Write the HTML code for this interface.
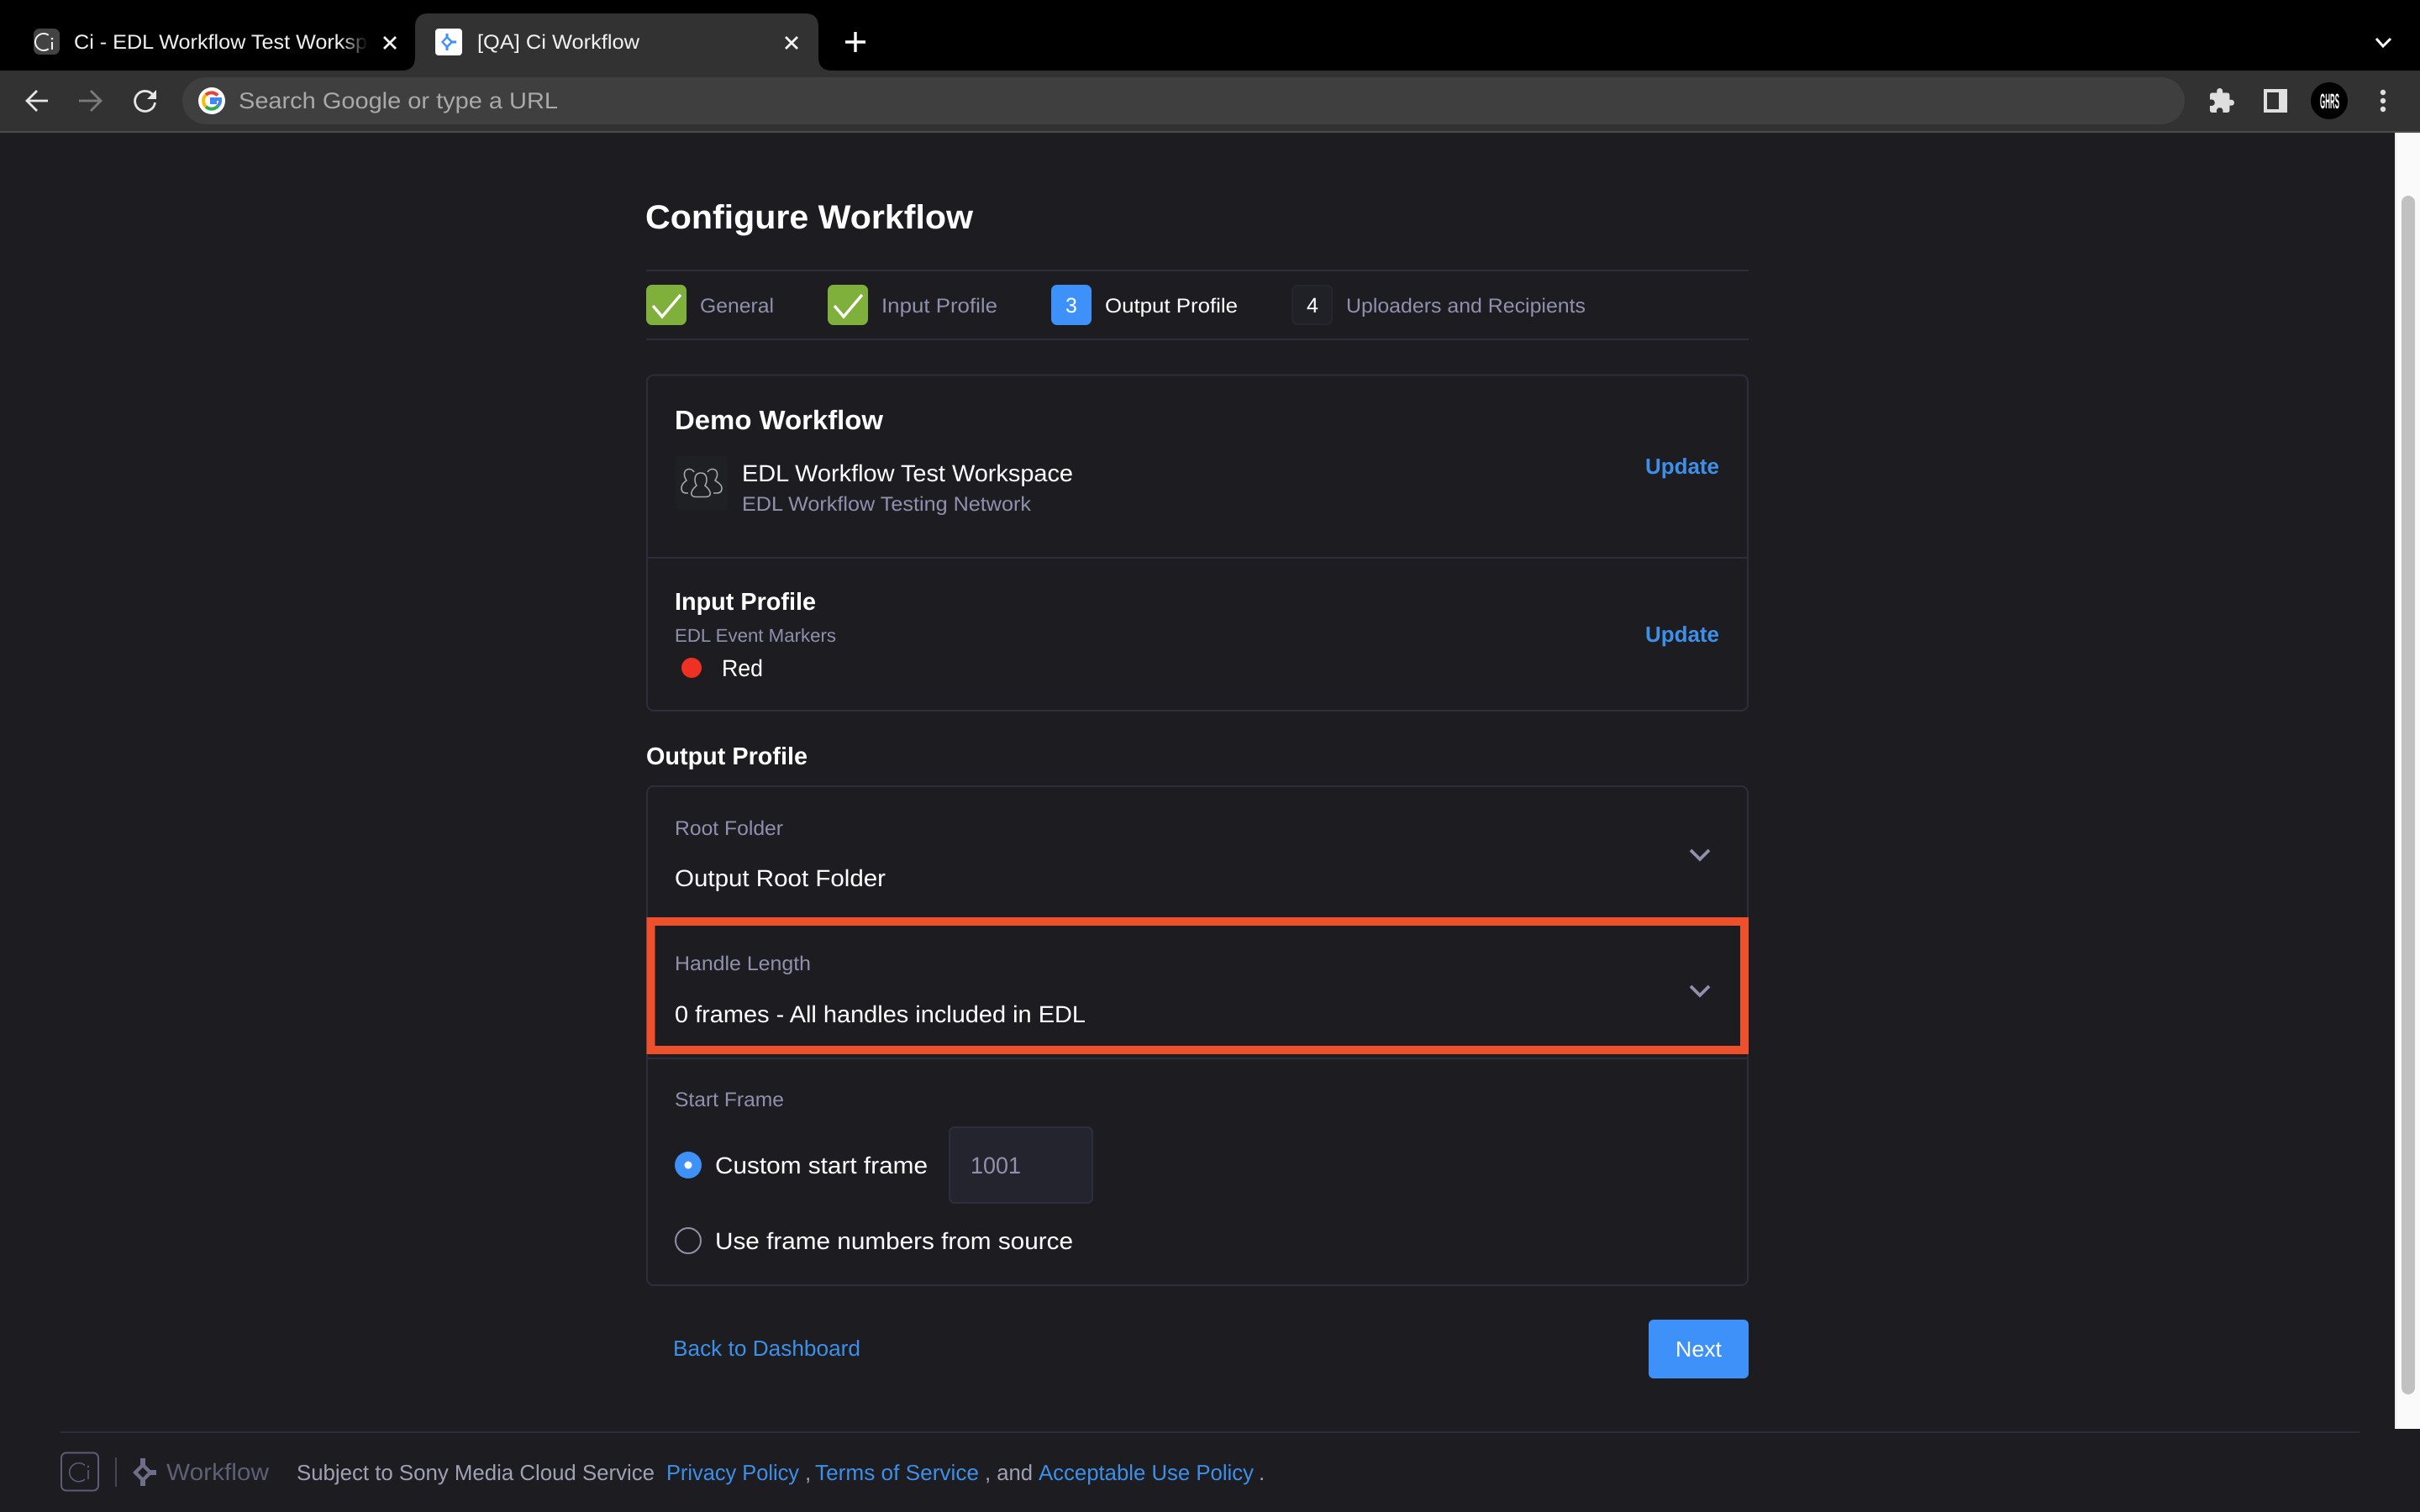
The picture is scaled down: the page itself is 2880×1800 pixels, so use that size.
<!DOCTYPE html>
<html lang="en">
<head>
<meta charset="utf-8">
<title>[QA] Ci Workflow</title>
<style>
html,body{margin:0;padding:0;width:2880px;height:1800px;overflow:hidden;background:#1c1c21}
svg{display:block;position:absolute;left:0;top:0}
text{font-family:"Liberation Sans",Arial,sans-serif;text-rendering:geometricPrecision;white-space:pre}
.w{fill:#fff}
.m{fill:#9090ae}
.b{fill:#3d8fe8}
.bd{font-weight:700}
</style>
</head>
<body>
<svg width="2880" height="1800" viewBox="0 0 2880 1800" xmlns="http://www.w3.org/2000/svg">
<defs>
<linearGradient id="fade" gradientUnits="userSpaceOnUse" x1="405" y1="0" x2="438" y2="0">
<stop offset="0" stop-color="#f0f0f0"/><stop offset="1" stop-color="#f0f0f0" stop-opacity="0"/>
</linearGradient>
</defs>
<rect width="2880" height="1800" fill="#1c1c21"/>

<!-- browser chrome -->
<rect width="2880" height="84" fill="#000"/>
<rect y="84" width="2880" height="72" fill="#323232"/>
<rect y="156" width="2880" height="2" fill="#4c4c4c"/>
<path d="M478 84Q494 84 494 68V32Q494 16 510 16H958Q974 16 974 32V68Q974 84 990 84Z" fill="#323232"/>

<!-- tab 1 -->
<rect x="40" y="34" width="31" height="31" rx="7" fill="#434343"/>
<path d="M57.700 41.800A10 10 0 1 0 57.700 58.200" fill="none" stroke="#f2f2f2" stroke-width="2"/>
<path d="M62 50V59" stroke="#f2f2f2" stroke-width="2"/><circle cx="62" cy="46" r="1.300" fill="#f2f2f2"/>
<text x="88" y="58" font-size="24" fill="url(#fade)" textLength="349" lengthAdjust="spacingAndGlyphs">Ci - EDL Workflow Test Worksp</text>
<path d="M457 44L471 58M471 44L457 58" stroke="#f4f4f4" stroke-width="2.800" fill="none"/>

<!-- tab 2 -->
<rect x="518" y="34" width="32" height="32" rx="4" fill="#fff"/>
<path d="M530.500 40H533.500V44L538 48.500H543V51.500H538L533.500 56V60H530.500V56L525 50L530.500 44Z" fill="#3d91f8"/>
<path d="M532 46L536 50L532 54L528 50Z" fill="#fff"/>
<text x="568" y="58" font-size="24" fill="#f0f0f0" textLength="193" lengthAdjust="spacingAndGlyphs">[QA] Ci Workflow</text>
<path d="M935 44L949 58M949 44L935 58" stroke="#f4f4f4" stroke-width="2.800" fill="none"/>

<!-- new tab -->
<path d="M1018 38V62M1006 50H1030" stroke="#fff" stroke-width="3.400" fill="none"/>
<path d="M2828 46L2836 55L2845 46" stroke="#fff" stroke-width="3" fill="none"/>

<!-- nav -->
<path d="M57 120H34M44 108L32 120L44 132" stroke="#e6e6e6" stroke-width="2.800" fill="none"/>
<path d="M94 120H118M108 108L120 120L108 132" stroke="#7b7b7b" stroke-width="2.800" fill="none"/>
<path d="M182 113A12 12 0 1 0 184.500 122" stroke="#e6e6e6" stroke-width="2.800" fill="none"/>
<path d="M186 107V118H175Z" fill="#e6e6e6"/>

<!-- omnibox -->
<rect x="217" y="92" width="2383" height="56" rx="28" fill="#3f3f3f"/>
<circle cx="252" cy="120" r="16" fill="#fff"/>
<path d="M259 113.500A10 10 0 0 0 245 113" fill="none" stroke="#ea4335" stroke-width="4"/>
<path d="M245 113A10 10 0 0 0 245 127" fill="none" stroke="#fbbc05" stroke-width="4"/>
<path d="M245 127A10 10 0 0 0 259.500 126" fill="none" stroke="#34a853" stroke-width="4"/>
<path d="M259.500 126A10 10 0 0 0 262 118H252V122H258" fill="none" stroke="#4285f4" stroke-width="4"/>
<text x="284" y="129" font-size="27" fill="#a9a9a9" textLength="380" lengthAdjust="spacingAndGlyphs">Search Google or type a URL</text>

<!-- toolbar right -->
<path transform="translate(2627.200 103.600) scale(1.380)" fill="#dedede" d="M20.500 11H19V7c0-1.100-.9-2-2-2h-4V3.500C13 2.120 11.880 1 10.500 1S8 2.120 8 3.500V5H4c-1.100 0-1.990.9-1.990 2v3.800H3.500c1.490 0 2.700 1.210 2.700 2.700s-1.210 2.700-2.700 2.700H2V20c0 1.100.9 2 2 2h3.800v-1.500c0-1.490 1.210-2.700 2.700-2.700 1.490 0 2.700 1.210 2.700 2.700V22H17c1.100 0 2-.9 2-2v-4h1.500c1.380 0 2.500-1.120 2.500-2.500S21.880 11 20.500 11z"/>
<rect x="2694" y="106" width="28" height="28" fill="#e0e0e0"/>
<rect x="2698" y="110" width="14" height="20" fill="#323232"/>
<circle cx="2772" cy="120" r="22" fill="#000"/>
<text x="2761" y="129" font-size="25" class="w bd" textLength="23" lengthAdjust="spacingAndGlyphs">GHRS</text>
<circle cx="2836" cy="110" r="3.200" fill="#dedede"/><circle cx="2836" cy="120" r="3.200" fill="#dedede"/><circle cx="2836" cy="130" r="3.200" fill="#dedede"/>

<!-- scrollbar -->
<rect x="2850" y="158" width="30" height="1543" fill="#fafafa"/>
<rect x="2850" y="158" width="2" height="1543" fill="#ececec"/>
<rect x="2858" y="233" width="16" height="1427" rx="8" fill="#c1c1c1"/>

<!-- heading -->
<text x="768" y="272" font-size="40" class="w bd" textLength="390" lengthAdjust="spacingAndGlyphs">Configure Workflow</text>
<rect x="769" y="321" width="1312" height="2" fill="#2d2d3d"/>
<rect x="769" y="403" width="1312" height="2" fill="#2d2d3d"/>

<!-- steps -->
<rect x="769" y="339" width="48" height="48" rx="7" fill="#7fb03c"/>
<path d="M777 364L788 377L810 351" stroke="#fff" stroke-width="3.400" fill="none"/>
<text x="833" y="372" font-size="24" class="m" textLength="88" lengthAdjust="spacingAndGlyphs">General</text>
<rect x="985" y="339" width="48" height="48" rx="7" fill="#7fb03c"/>
<path d="M993 364L1004 377L1026 351" stroke="#fff" stroke-width="3.400" fill="none"/>
<text x="1049" y="372" font-size="24" class="m" textLength="138" lengthAdjust="spacingAndGlyphs">Input Profile</text>
<rect x="1251" y="339" width="48" height="48" rx="7" fill="#3d91f8"/>
<text x="1275" y="372" font-size="25" class="w" text-anchor="middle">3</text>
<text x="1315" y="372" font-size="24" class="w" textLength="158" lengthAdjust="spacingAndGlyphs">Output Profile</text>
<rect x="1538" y="340" width="47" height="46" rx="6" fill="#202126" stroke="#26262e" stroke-width="2"/>
<text x="1562" y="372" font-size="25" class="w" text-anchor="middle">4</text>
<text x="1602" y="372" font-size="24" class="m" textLength="285" lengthAdjust="spacingAndGlyphs">Uploaders and Recipients</text>

<!-- summary card -->
<rect x="770" y="446.500" width="1310" height="399.500" rx="8" fill="none" stroke="#2d2d3d" stroke-width="2"/>
<rect x="770" y="663" width="1310" height="2" fill="#2d2d3d"/>
<text x="803" y="511" font-size="32" class="w bd" textLength="248" lengthAdjust="spacingAndGlyphs">Demo Workflow</text>
<rect x="804" y="543" width="62" height="64" rx="4" fill="#1f2024"/>
<g fill="none" stroke="#a8a8a8" stroke-width="1.600">
<path d="M828 591.500H840C844 591.500 846 589 845 586C844 582 841 580 839 578C842 574 842.500 563 834 563C825.500 563 826 574 829 578C827 580 824 582 823 586C822 589 824 591.500 828 591.500Z"/>
<path d="M826 562C823 557 815 557 814.500 564C814 568 816 570 817 572C814 574 811 577 811 581C811 585 813 587 817 587H819"/>
<path d="M842 562C845 557 853 557 853.500 564C854 568 852 570 851 572C854 574 859 577 859 581C859 585 857 587 853 587H849"/>
</g>
<text x="883" y="573" font-size="28" class="w" textLength="394" lengthAdjust="spacingAndGlyphs">EDL Workflow Test Workspace</text>
<text x="883" y="608" font-size="24" class="m" textLength="344" lengthAdjust="spacingAndGlyphs">EDL Workflow Testing Network</text>
<text x="1958" y="564" font-size="26" class="b bd" textLength="88" lengthAdjust="spacingAndGlyphs">Update</text>
<text x="803" y="726" font-size="29" class="w bd" textLength="168" lengthAdjust="spacingAndGlyphs">Input Profile</text>
<text x="803" y="764" font-size="22" class="m" textLength="192" lengthAdjust="spacingAndGlyphs">EDL Event Markers</text>
<circle cx="823" cy="795" r="12" fill="#ef3124"/>
<text x="859" y="805" font-size="28" class="w" textLength="49" lengthAdjust="spacingAndGlyphs">Red</text>
<text x="1958" y="764" font-size="26" class="b bd" textLength="88" lengthAdjust="spacingAndGlyphs">Update</text>

<!-- output profile -->
<text x="769" y="910" font-size="29" class="w bd" textLength="192" lengthAdjust="spacingAndGlyphs">Output Profile</text>
<rect x="770" y="936" width="1310" height="594" rx="8" fill="none" stroke="#2d2d3d" stroke-width="2"/>
<text x="803" y="994" font-size="24" class="m" textLength="129" lengthAdjust="spacingAndGlyphs">Root Folder</text>
<text x="803" y="1055" font-size="28" class="w" textLength="251" lengthAdjust="spacingAndGlyphs">Output Root Folder</text>
<path d="M2012 1012L2023 1023L2034 1012" stroke="#9090ae" stroke-width="3.800" fill="none"/>

<rect x="770" y="1259" width="1310" height="2" fill="#2d2d3d"/>
<rect x="774.500" y="1097" width="1301.500" height="153" fill="#1c1c21" stroke="#ee502b" stroke-width="10"/>
<text x="803" y="1155" font-size="24" class="m" textLength="162" lengthAdjust="spacingAndGlyphs">Handle Length</text>
<text x="803" y="1217" font-size="28" class="w" textLength="489" lengthAdjust="spacingAndGlyphs">0 frames - All handles included in EDL</text>
<path d="M2012 1174L2023 1185L2034 1174" stroke="#9090ae" stroke-width="3.800" fill="none"/>

<text x="803" y="1317" font-size="24" class="m" textLength="130" lengthAdjust="spacingAndGlyphs">Start Frame</text>
<circle cx="819" cy="1387" r="16" fill="#3d91f8"/><circle cx="819" cy="1387" r="4.500" fill="#fff"/>
<text x="851" y="1397" font-size="28" class="w" textLength="253" lengthAdjust="spacingAndGlyphs">Custom start frame</text>
<rect x="1130" y="1342" width="170" height="90" rx="6" fill="#24242e" stroke="#2d2d3d" stroke-width="2"/>
<text x="1155" y="1397" font-size="28" class="m" textLength="60" lengthAdjust="spacingAndGlyphs">1001</text>
<circle cx="819" cy="1477" r="15" fill="none" stroke="#9090a8" stroke-width="2"/>
<text x="851" y="1487" font-size="28" class="w" textLength="426" lengthAdjust="spacingAndGlyphs">Use frame numbers from source</text>

<!-- actions -->
<text x="801" y="1614" font-size="26" class="b" textLength="223" lengthAdjust="spacingAndGlyphs">Back to Dashboard</text>
<rect x="1962" y="1571" width="119" height="70" rx="6" fill="#3d91f8"/>
<text x="1994" y="1615" font-size="26" class="w" textLength="55" lengthAdjust="spacingAndGlyphs">Next</text>

<!-- footer -->
<rect x="72" y="1704" width="2736" height="2" fill="#2d2d3d"/>
<rect x="73" y="1729.500" width="44" height="45" rx="6" fill="none" stroke="#5c5c74" stroke-width="2"/>
<path d="M101 1744.500A11 11 0 1 0 101 1761" fill="none" stroke="#5c5c74" stroke-width="1.600"/>
<path d="M105 1750V1761" stroke="#5c5c74" stroke-width="1.600"/><circle cx="105" cy="1746" r="1.200" fill="#5c5c74"/>
<rect x="137" y="1735" width="2" height="35" fill="#44445a"/>
<path d="M167 1736H173V1744L179 1750H186V1756H179L173 1762V1769H167V1762L158 1753L167 1744Z" fill="#6e6e8a"/>
<path d="M170 1747L176 1753L170 1759L164 1753Z" fill="#1c1c21"/>
<text x="198" y="1762" font-size="28" fill="#5e5e74" textLength="122" lengthAdjust="spacingAndGlyphs">Workflow</text>
<text x="353" y="1762" font-size="26" fill="#a0a0b4" textLength="426" lengthAdjust="spacingAndGlyphs">Subject to Sony Media Cloud Service</text>
<text x="793" y="1762" font-size="26" class="b" textLength="158" lengthAdjust="spacingAndGlyphs">Privacy Policy</text>
<text x="958" y="1762" font-size="26" fill="#a0a0b4">,</text>
<text x="970" y="1762" font-size="26" class="b" textLength="195" lengthAdjust="spacingAndGlyphs">Terms of Service</text>
<text x="1172" y="1762" font-size="26" fill="#a0a0b4" textLength="57" lengthAdjust="spacingAndGlyphs">, and</text>
<text x="1236" y="1762" font-size="26" class="b" textLength="256" lengthAdjust="spacingAndGlyphs">Acceptable Use Policy</text>
<text x="1498" y="1762" font-size="26" fill="#a0a0b4">.</text>
</svg>
</body>
</html>
